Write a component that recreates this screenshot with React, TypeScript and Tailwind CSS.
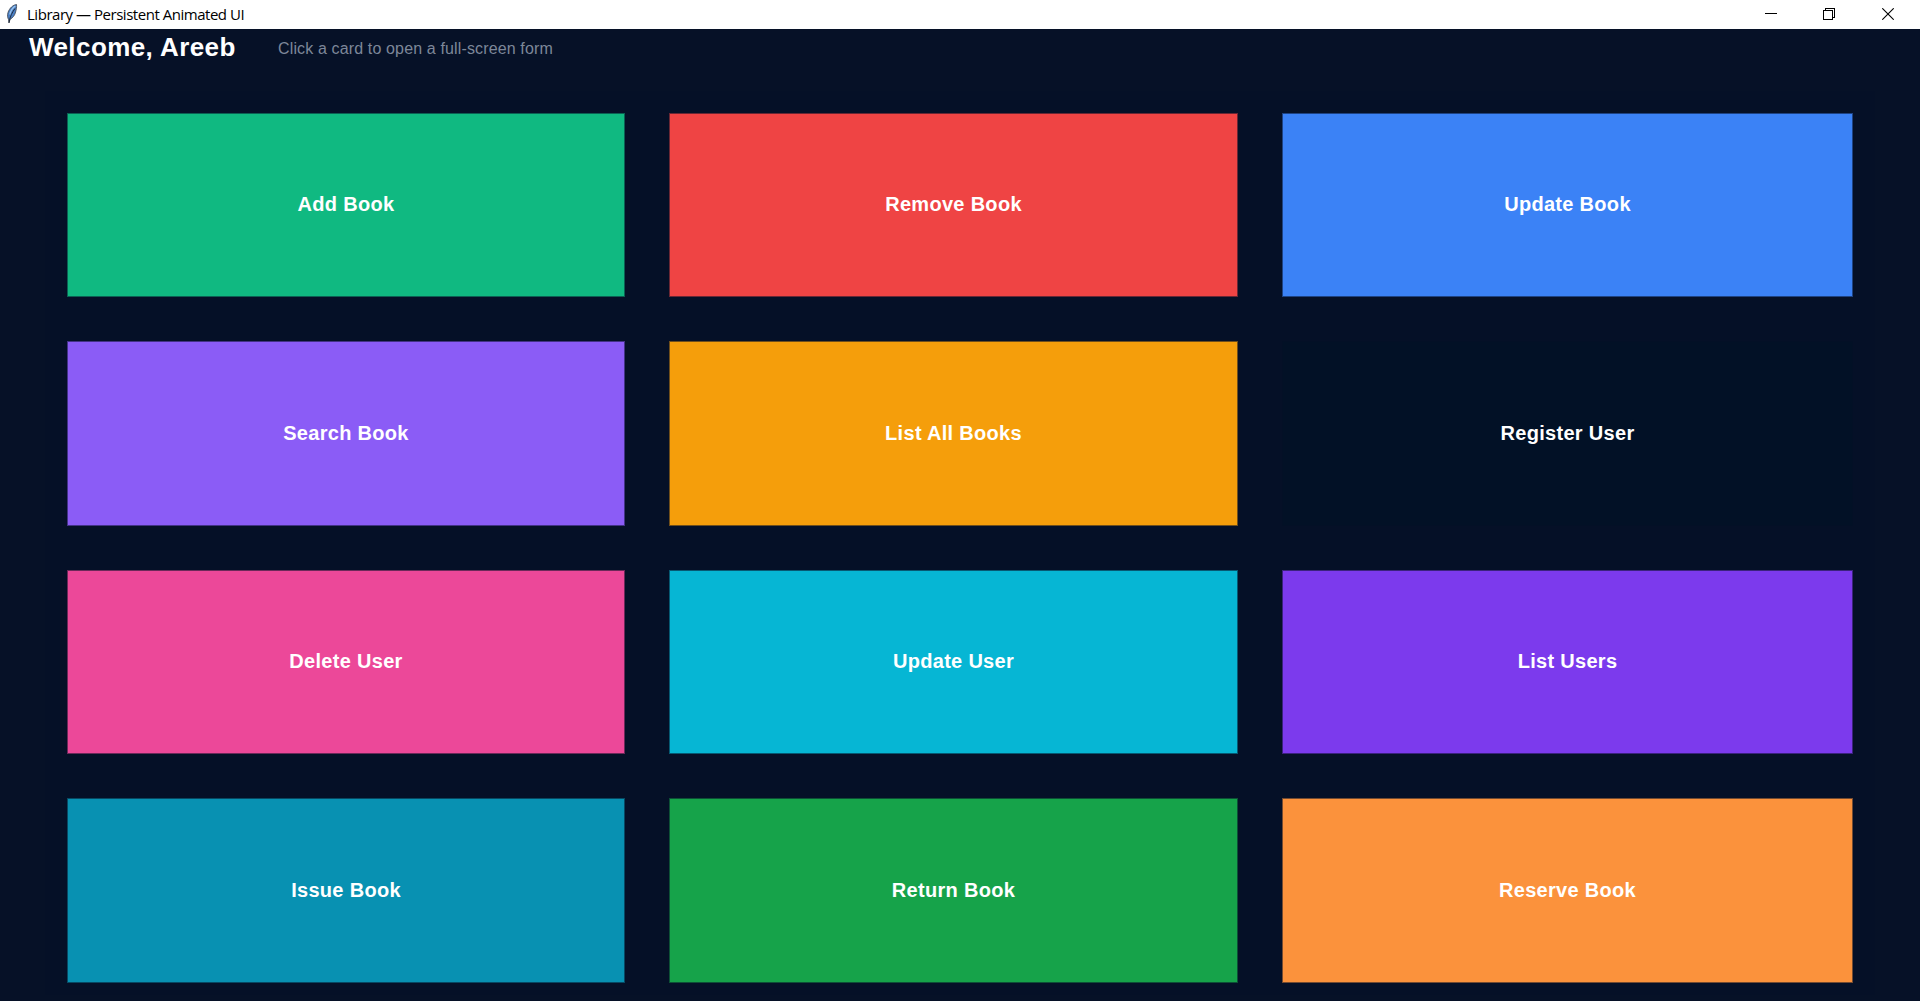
import React from 'react';

type Card = { label: string; tone: string };

const cards: Card[] = [
  { label: 'Add Book', tone: 'bg-[#10b981] border-[#0b6153]' },
  { label: 'Remove Book', tone: 'bg-[#ef4444] border-[#6a2734]' },
  { label: 'Update Book', tone: 'bg-[#3b82f6] border-[#1e4383]' },
  { label: 'Search Book', tone: 'bg-[#8b5cf6] border-[#433286]' },
  { label: 'List All Books', tone: 'bg-[#f59e0b] border-[#6f4e1b]' },
  { label: 'Register User', tone: 'bg-[#021126] border-[#031026]' },
  { label: 'Delete User', tone: 'bg-[#ec4899] border-[#6b2959]' },
  { label: 'Update User', tone: 'bg-[#06b6d4] border-[#065972]' },
  { label: 'List Users', tone: 'bg-[#7c3aed] border-[#3b227d]' },
  { label: 'Issue Book', tone: 'bg-[#0891b2] border-[#074963]' },
  { label: 'Return Book', tone: 'bg-[#16a34a] border-[#0d5036]' },
  { label: 'Reserve Book', tone: 'bg-[#fb923c] border-[#744b31]' },
];

function Feather() {
  return (
    <svg width="12" height="20" viewBox="0 0 12 20" className="block">
      <path d="M10.500 .5C7 1 3.500 4 2 8.500C1.200 11 1.500 13.500 2.500 15.500L3 19L4 15.500C7 13.500 8.500 11.500 9.300 9C10.300 6 10.800 3 10.500 .5Z" fill="#4a7fc4" stroke="#3c424d" strokeWidth=".8" />
      <path d="M9.300 2C6.500 4 4.500 7 3.800 10.500" fill="none" stroke="#9cc6f0" strokeWidth="1.300" />
      <path d="M9 4.500C6.500 8 4 12 3 18.500" fill="none" stroke="#1c2330" strokeWidth=".9" />
    </svg>
  );
}

function TitleBar() {
  return (
    <header className="flex h-[29px] shrink-0 items-start justify-between bg-white text-black">
      <div className="flex">
        <div className="ml-[6px] mt-[4px]">
          <Feather />
        </div>
        <span className="ml-[9px] mt-[4px] whitespace-nowrap font-['Open_Sans','Noto_Sans',sans-serif] text-[15px] leading-[20px] tracking-[-0.47px]">
          Library — Persistent Animated UI
        </span>
      </div>
      <div className="flex pr-[26px] pt-[8px]">
        <svg className="mr-[46px]" width="12" height="12" viewBox="0 0 12 12" shapeRendering="crispEdges">
          <path d="M0 5.500H12" stroke="#000" />
        </svg>
        <svg className="mr-[47px]" width="12" height="12" viewBox="0 0 12 12" fill="none" stroke="#000" shapeRendering="crispEdges">
          <path d="M.5 2.500H9.500V11.500H.5ZM2.500 2.500V.5H11.500V9.500H9.500" />
        </svg>
        <svg width="12" height="12" viewBox="0 0 12 12" fill="none" stroke="#000" strokeWidth="1.100">
          <path d="M.3 .3L11.700 11.700M11.700 .3L.3 11.700" />
        </svg>
      </div>
    </header>
  );
}

export default function App() {
  return (
    <div className="flex h-[1001px] w-[1920px] flex-col overflow-hidden bg-[#061127] font-['Liberation_Sans',Arial,sans-serif]">
      <TitleBar />
      <div className="flex h-[62px] shrink-0 items-start pl-[29px]">
        <h1 className="w-[249px] whitespace-nowrap pt-[3px] text-[26px] font-bold leading-[30px] tracking-[0.42px] text-white">
          Welcome, Areeb
        </h1>
        <p className="whitespace-nowrap pt-[10px] text-[16px] leading-[20px] tracking-[0.14px] text-[#7d8799]">
          Click a card to open a full-screen form
        </p>
      </div>
      <main className="mx-[45px] grid h-[904px] shrink-0 grid-cols-[558px_569px_571px] grid-rows-[184px_185px_184px_185px] content-start gap-[44px] bg-[#051027] pl-[22px] pt-[22px]">
        {cards.map(({ label, tone }) => (
          <button
            key={label}
            className={`flex items-center justify-center border pb-[2px] text-[20px] font-bold leading-[24px] tracking-[0.3px] text-white ${tone}`}
          >
            {label}
          </button>
        ))}
      </main>
    </div>
  );
}
